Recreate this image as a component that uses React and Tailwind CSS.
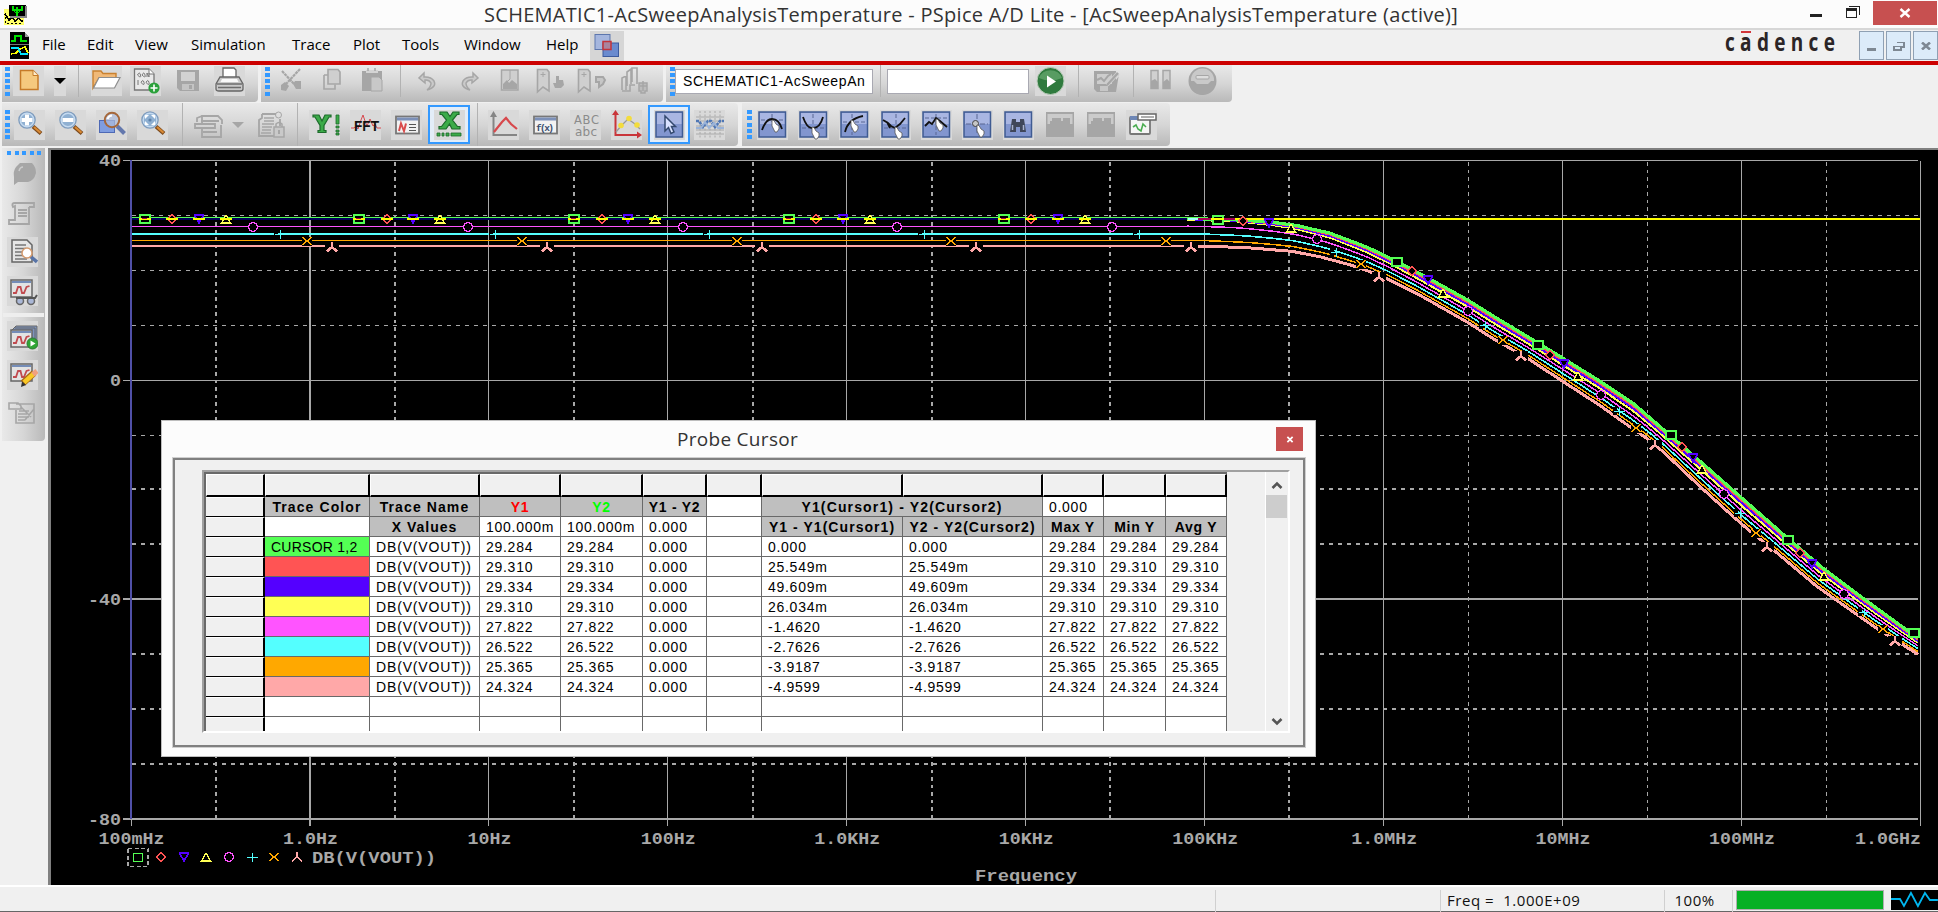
import React from 'react';

const UI = "font-['Open_Sans']";

/* ---------- chart data ---------- */
const DECADE = 178.95;
const X0 = 131;
const TOP = [[131, 218.5], [1187, 218.5], [1240, 220], [1275, 222.5], [1297, 225.5], [1330, 233], [1367, 247], [1390, 258], [1423, 275], [1468, 300], [1500, 320], [1535, 341], [1563, 358], [1600, 381], [1633, 403], [1663, 429], [1700, 461], [1741, 497], [1783, 534], [1823, 568], [1863, 598], [1900, 625], [1920, 639]];
const BOTTOM = [[131, 246], [1205, 246], [1250, 248], [1292, 251.5], [1320, 257], [1353, 266], [1370, 272], [1387, 279], [1417, 294], [1468, 323], [1493, 339], [1528, 359], [1563, 382], [1600, 406], [1628, 426], [1647, 439], [1663, 452], [1700, 487], [1733, 517], [1748, 530], [1773, 550], [1817, 587], [1847, 608], [1877, 629], [1893, 639], [1920, 656]];

function at(points, x) {
  for (let i = 1; i < points.length; i++) {
    if (x <= points[i][0]) {
      const [ax, ay] = points[i - 1];
      const [bx, by] = points[i];
      return ay + ((by - ay) * (x - ax)) / (bx - ax);
    }
  }
  return points[points.length - 1][1];
}

const TRACES = [
  { color: '#ffa8a8', low: 1, high: 0.98, w: 3 },
  { color: '#ffa800', low: 0.8, high: 0.82, w: 1.5 },
  { color: '#54ffff', low: 0.56, high: 0.65, w: 1.6 },
  { color: '#ff54ff', low: 0.28, high: 0.48, w: 1.5 },
  { color: '#ffff54', low: 0.05, high: 0.3, w: 2 },
  { color: '#5400ff', low: 0.03, high: 0.2, w: 2 },
  { color: '#ff5454', low: 0.02, high: 0.11, w: 1.8 },
  { color: '#54ff54', low: 0, high: 0.01, w: 3.2 },
];

function traceY(t, x) {
  const k = Math.min(1, Math.max(0, (x - 1230) / 200));
  const f = t.low + (t.high - t.low) * k;
  const a = at(TOP, x);
  return a + (at(BOTTOM, x) - a) * f;
}

function tracePoints(t, start) {
  const pts = [`${start},${traceY(t, start).toFixed(1)}`];
  for (let x = start + 3; x <= 1920; x += 4) pts.push(`${x},${traceY(t, x).toFixed(1)}`);
  return pts.join(' ');
}

const KINDS = ['square', 'diamond', 'down', 'up', 'circle', 'plus', 'cross', 'tee'];
const PITCH = 214.8;
const FLAT_X = [144.5, 172, 198.5, 225.5, 253, 279.7, 307, 332];
const FLAT_Y = [218.5, 219, 219, 219, 226.5, 234, 240.5, 247];
const FLAT_LINES = [[226, 1, '#ff54ff'], [233, 2, '#54ffff'], [240, 1, '#ffa800'], [245, 2, '#ffa8a8']];
const FALLING = [
  [[1217.5, 220], [1243, 221], [1268.5, 223], [1291, 228], [1316.5, 239], [1336, 251.5], [1361, 264], [1379, 277]],
  [[1397, 262], [1412, 271], [1428, 280], [1443, 293], [1468, 311], [1484.5, 325], [1503, 340], [1520.5, 356]],
  [[1537.5, 345], [1550, 355], [1563.5, 364], [1578, 376], [1601, 395], [1619, 411], [1635.5, 428], [1654.5, 445]],
  [[1671, 435], [1682, 446.5], [1692.5, 458], [1701.5, 469], [1724, 494], [1740, 512.5], [1755.5, 532.5], [1767, 547]],
  [[1787.5, 540], [1799.5, 553], [1812, 564], [1823.5, 576], [1843.5, 594], [1863.5, 612], [1883, 629], [1894.5, 641]],
  [[1914, 633]],
];

function Marker({ kind, x, y, bold }) {
  const s = bold ? 2 : 1;
  const p = { fill: 'none', strokeWidth: 1.3 };
  return (
    <g transform={`translate(${Math.round(x)} ${Math.round(y)})`}>
      {kind === 'square' && <rect x={-5} y={-4} width={bold ? 10 : 9} height={8} fill="#000" stroke="#54ff54" strokeWidth={s} />}
      {kind === 'diamond' && <path d="M0-4.5 4.5 0 0 4.5-4.5 0Z" {...p} fill="#000" stroke="#ff5454" />}
      {kind === 'down' && <path d="M-5-4H5M-4-3 0 4 4-3" {...p} fill="#000" stroke="#5400ff" strokeWidth={1.8} />}
      {kind === 'up' && <path d="M0-4 4.5 4H-4.5Z" {...p} fill="#000" stroke="#ffff54" />}
      {kind === 'circle' && <circle r={4.3} {...p} fill="#000" stroke="#ff54ff" />}
      {kind === 'plus' && <g>{bold && <rect x={-6} y={-4} width={4} height={8} fill="#000" />}<rect x={-5} y={0} width={11} height={1} fill="#54ffff" /><rect x={0} y={-4} width={1} height={9} fill="#54ffff" /></g>}
      {kind === 'cross' && <g><rect x={-5} y={-4.5} width={10} height={9} fill="#000" /><path d="M-5-4 5 4M-5 4 5-4" {...p} stroke="#ffa800" /></g>}
      {kind === 'tee' && <g>{bold && <rect x={-7} y={-5} width={14} height={9} fill="#000" />}<path d="M0-5V0L-5 4.5M0 0 5 4.5" {...p} strokeWidth={bold ? 2.6 : 1.3} stroke="#ffa8a8" /></g>}
    </g>
  );
}

const DECADES = ['100mHz', '1.0Hz', '10Hz', '100Hz', '1.0KHz', '10KHz', '100KHz', '1.0MHz', '10MHz', '100MHz', '1.0GHz'];
const H_LINES = [[160.5, 1, 0], [215.5, 1, 1], [270.5, 1, 1], [325.5, 1, 1], [380.5, 1, 0], [435.5, 1, 1], [489, 2, 1], [544, 2, 1], [599, 2, 0], [654, 2, 1], [709, 2, 1], [764, 2, 1], [819, 2, 0]];
const Y_LABELS = [['40', 166], ['0', 386], ['-40', 605], ['-80', 825]];

function Plot() {
  const mono = "font-['Liberation_Mono'] font-bold";
  return (
    <svg className="block h-full w-full" viewBox="51 150 1887 735" preserveAspectRatio="none" shapeRendering="crispEdges">
      <g stroke="#a8a8a8" fill="none">
        {H_LINES.map(([y, w, d]) => (
          <line key={y} x1={d ? 132 : 123} x2="1918" y1={y} y2={y} strokeWidth={w} strokeDasharray={d ? '4 5' : undefined} />
        ))}
        {DECADES.map((_, i) => {
          const x = Math.floor(X0 + i * DECADE);
          return <line key={i} x1={i === 1 ? x + 1 : x + 0.5} x2={i === 1 ? x + 1 : x + 0.5} y1={i === 0 ? 819 : 161} y2="826" strokeWidth={i === 1 ? 2 : 1} />;
        })}
        {DECADES.slice(0, 10).map((_, i) => {
          const x = Math.floor(X0 + i * DECADE + 85.2);
          return <line key={i} x1={i < 7 ? x : x + 0.5} x2={i < 7 ? x : x + 0.5} y1="162" y2="819" strokeWidth={i < 7 ? 2 : 1} strokeDasharray="3.5 4" />;
        })}
      </g>
      <line x1="131" x2="131" y1="160" y2="819" stroke="#5050a8" strokeWidth="2" />
      <rect x="132" y="217" width="1055" height="1" fill="#54ff54" />
      <rect x="132" y="218" width="1055" height="2" fill="#000058" />
      {FLAT_LINES.map(([y, h, c]) => <rect key={c} x="132" y={y} width="1055" height={h} fill={c} />)}
      {TRACES.map((t) => (
        <polyline key={t.color} points={tracePoints(t, 1187)} fill="none" stroke={t.color} strokeWidth={t.w} />
      ))}
      <rect x="1188" y="218" width="10" height="2" fill="#a8ffff" />
      <rect x="1198" y="218" width="37" height="2" fill="#a80054" />
      <rect x="1235" y="218" width="685" height="2" fill="#ffff00" />
      {[0, 1, 2, 3, 4].map((g) => KINDS.map((k, i) => (
        <Marker key={`${g}${k}`} kind={k} x={FLAT_X[i] + g * PITCH} y={FLAT_Y[i]} bold={g < 5} />
      )).filter((_, i) => g < 4 || i > 3 || FLAT_X[i] + g * PITCH < 1190))}
      {[0, 1, 2, 3, 4].map((g) => [0, 1, 2, 3].map((i) => (
        <g key={`${g}-${i}`}>
          <rect x={Math.round(FLAT_X[i] + g * PITCH) - 6} y="218" width="12" height="2" fill="#ffff00" />
          {i === 0 && <rect x={Math.round(FLAT_X[0] + g * PITCH) - 3} y="218" width="5" height="1" fill="#a80054" />}
        </g>
      )))}
      {FALLING.map((row, g) => row.map(([x, y], i) => <Marker key={`${g}${i}`} kind={KINDS[i]} x={x} y={y} bold />))}
      <rect x="1211" y="218" width="13" height="2" fill="#ffff00" />
      <rect x="128" y="848.5" width="20" height="18" fill="none" stroke="#a8a8a8" strokeWidth="1.4" strokeDasharray="4 2.5" />
      {[138, 161, 184, 206, 229, 252, 274, 297].map((x, i) => <Marker key={x} kind={KINDS[i]} x={x} y={857} />)}
      <g className={mono} fill="#a8a8a8" fontSize="16.5">
        {Y_LABELS.map(([t, y]) => <text key={t} x={121} y={y} textAnchor="end" textLength={t.length * 11} lengthAdjust="spacingAndGlyphs">{t}</text>)}
        {DECADES.map((t, i) => {
          const w = t.length * 11;
          const x = i === 10 ? 1921 - w : X0 + i * DECADE - w / 2 + 0.5;
          return <text key={t} x={x} y="843.5" textLength={w} lengthAdjust="spacingAndGlyphs">{t}</text>;
        })}
        <text x="312" y="862.5" textLength="124" lengthAdjust="spacingAndGlyphs">DB(V(VOUT))</text>
        <text x="975" y="881" textLength="102" lengthAdjust="spacingAndGlyphs">Frequency</text>
      </g>
    </svg>
  );
}

/* ---------- icons (31 x 30 boxes) ---------- */
function Svg({ children, lit }) {
  return (
    <svg viewBox="0 0 31 30" className={lit ? 'block h-[30px] w-[31px] bg-[#d9d9d9]' : 'block h-[30px] w-[31px]'}>
      {children}
    </svg>
  );
}
const G = '#a6a6a6';

function Lens({ children }) {
  return (
    <g>
      <path d="M19 16.5 27 23.5" stroke="#7d4a1c" strokeWidth="4" />
      <path d="M20 17 26.5 22.8" stroke="#d98a35" strokeWidth="2.2" />
      <circle cx="13" cy="10" r="8" fill="#8fb0d2" stroke="#7f9cbd" strokeWidth="1.6" />
      <circle cx="13" cy="10" r="6.8" fill="none" stroke="#c4daf0" strokeWidth="1.4" />
      {children}
    </g>
  );
}
const ZoomInIcon = () => <Svg lit><Lens><path d="M13 4.5V15.5M7.5 10H18.5" stroke="#fff" strokeWidth="4" /></Lens></Svg>;
const ZoomOutIcon = () => <Svg lit><Lens><path d="M7.5 10H18.5" stroke="#fff" strokeWidth="4" /></Lens></Svg>;
const ZoomAreaIcon = () => (
  <Svg lit>
    <rect x="3.5" y="10.5" width="15" height="12" fill="#7f9de0" stroke="#4e69b5" />
    <path d="M21 16 28.5 23.5" stroke="#6478ad" strokeWidth="4" />
    <circle cx="16" cy="10" r="7.2" fill="#aebcdc" fillOpacity=".7" stroke="#a5673a" strokeWidth="2" />
    <path d="M11.5 9a5 5 0 0 1 4.5-3.5" fill="none" stroke="#fff" strokeWidth="2" />
  </Svg>
);
const ZoomFitIcon = () => (
  <Svg lit><Lens><path d="M8 5h4L8 9zM18 5h-4l4 4zM8 15h4l-4-4zM18 15h-4l4-4z" fill="#fff" /><circle cx="13" cy="10" r="1.6" fill="#5d83ad" /></Lens></Svg>
);
const NewIcon = () => (
  <Svg lit>
    <path d="M7.5 4.5H20L25 9.5V23.5H7.5Z" fill="#f5c97e" stroke="#c67b29" strokeWidth="1.5" />
    <path d="M20 4.5V9.5H25" fill="#fff0d0" stroke="#c67b29" />
  </Svg>
);
const OpenIcon = () => (
  <Svg lit>
    <path d="M2 22V5h8l2 2.5h13V12H8z" fill="#f0b978" stroke="#c9812f" strokeWidth="1.4" />
    <path d="M8 11.5H29L23.5 22H2.5Z" fill="#fff" stroke="#8d8d8d" strokeWidth="1.2" />
  </Svg>
);
const SimDocIcon = () => (
  <Svg lit>
    <path d="M4.5 3H19L24 8V24H4.5Z" fill="#e9e9e9" stroke="#777" strokeWidth="1.3" />
    <path d="M19 3V8H24" fill="#fff" stroke="#777" />
    <path d="M7.5 9q2-4 3 0t-3 0M12 9q2-4 3 0t-3 0M17 11V7l2 4V7M8 19V14M11 16.5q2-4 3 0t-3 0M16 16.5q2-4 3 0t-3 0" fill="none" stroke="#777" />
    <circle cx="24" cy="22" r="5.6" fill="#2aa13a" /><path d="M24 18.500V25.500M20.500 22H27.500" stroke="#fff" strokeWidth="1.6" />
  </Svg>
);
const SaveIcon = () => (
  <Svg><path d="M5 4H27V25H8L5 22Z" fill={G} /><rect x="9" y="6" width="14" height="9" fill="#d2d2d2" /><rect x="10" y="18" width="12" height="6" fill="#c4c4c4" /><rect x="17" y="19" width="3" height="4" fill={G} /></Svg>
);
const PrintIcon = () => (
  <Svg lit>
    <path d="M9 12V2H20L22 4V12" fill="#fff" stroke="#666" strokeWidth="1.3" />
    <path d="M6 11H25L29 18V23Q29 25 26 25H5Q2 25 2 23V18Z" fill="#c9c9c9" stroke="#666" strokeWidth="1.3" />
    <path d="M3 18H28M4 21.5H27" stroke="#6d6d6d" strokeWidth="1.5" /><path d="M8 13H23L24.5 16H6.5Z" fill="#fafafa" />
  </Svg>
);
const CutIcon = () => (
  <Svg><path d="M6 5 18 18M24 3 9 19" stroke={G} strokeWidth="2.2" strokeDasharray="3 .6" fill="none" /><path d="M5 24v-5l4-3 4 4-3 5zM19 15h6v8h-5l-3-5z" fill={G} /></Svg>
);
const CopyIcon = () => (
  <Svg><path d="M12 3.5H22L24 6V18H12Z" fill="#cfcfcf" stroke={G} strokeWidth="1.6" /><path d="M8 9V23H19V18.500M8 9H12" fill="none" stroke={G} strokeWidth="1.6" /></Svg>
);
const PasteIcon = () => (
  <Svg><path d="M5 5H25V25H5Z" fill={G} /><path d="M9 4H21V7H9Z" fill="#d4d4d4" /><path d="M11 2V5M18 2V5" stroke={G} strokeWidth="1.5" /><path d="M14 11H22L25 14V25H14Z" fill="#c8c8c8" stroke={G} /></Svg>
);
const UndoIcon = () => <Svg><path d="M12 7 7 12 13 17V14Q17 13.500 19 17Q19 21 15 24Q25 21 22 15Q19 10.500 12 11Z" fill="#cacaca" stroke={G} strokeWidth="1.5" /></Svg>;
const RedoIcon = () => <Svg><path d="M19 7 24 12 18 17V14Q14 13.500 12 17Q12 21 16 24Q6 21 9 15Q12 10.500 19 11Z" fill="#cacaca" stroke={G} strokeWidth="1.5" /></Svg>;
const PageIcon = () => <Svg><path d="M7.5 4H24V24H7.500Z" fill="#cfcfcf" stroke={G} strokeWidth="1.5" /><path d="M16 4V13L12 17" stroke={G} fill="none" /><path d="M9 23V18l4-4 2 3 3-3 5 4v5z" fill={G} /></Svg>;
const TagHandIcon = ({ flip }) => (
  <Svg><path d="M2.5 3.5H12L14 6V25L8 21 2.5 26Z" fill="#cfcfcf" stroke={G} strokeWidth="1.6" /><path d="M8 6V11M5.5 8.500H10.500" stroke={G} />{flip ? <path d="M20 11h7l2 3-2 4-4 3v-5h-3z" fill="#c6c6c6" stroke={G} strokeWidth="2" /> : <path d="M21 17V10h3v4h4l1 5-3 3h-6l-2-5z" fill={G} />}</Svg>
);
const TagsIcon = () => <Svg><path d="M3 24V12l4-2V24M8 20V6l4-3V18M13 16V2h5V18M3 25h8v-6h5" fill="none" stroke={G} strokeWidth="1.6" /><path d="M20 17h8v8h-2v2h-4v-2h-2zM24 15v10M21 20h7" fill="#bcbcbc" stroke={G} strokeWidth="1.5" /></Svg>;
const RunIcon = () => (
  <Svg lit><circle cx="15.5" cy="15" r="13.5" fill="#2f7a3e" stroke="#b9ccb9" strokeWidth="1" /><path d="M4 12a12 11 0 0 1 23 0q-12 5-23 0" fill="#74b37b" opacity=".6" /><path d="M12 9.500 21 15.500 12 21.500Z" fill="#fff" /></Svg>
);
const SaveEditIcon = () => <Svg><path d="M4 5H26V14L29 10V8L26 26H7L4 23Z" fill={G} /><path d="M7 8H22V18H7Z" fill="#cdcdcd" /><path d="M7 14l4-2 3 3 4-5 3-2" stroke={G} strokeWidth="2" fill="none" /><path d="M17 19 28 7" stroke="#d0d0d0" strokeWidth="4" /><path d="M17 19 28 7" stroke={G} strokeWidth="2.2" /><rect x="10" y="20" width="8" height="5" fill="#c7c7c7" /></Svg>;
const PauseIcon = () => <Svg><path d="M6 4.500h7v18H6zM18 4.500h7v18h-7z" fill="#d0d0d0" stroke={G} strokeWidth="1.5" /><path d="M6 15l4-2 3 3v7H6zM18 16l4-3 3 3v7h-7z" fill={G} /></Svg>;
const StopIcon = () => <Svg><circle cx="15.5" cy="15" r="14" fill={G} /><circle cx="15.5" cy="14" r="11.5" fill="#c9c9c9" /><path d="M2 15h5l3 3h11l3-3h5q-1 11-13.500 14Q3 27 2 15" fill={G} /><rect x="9" y="9.500" width="13" height="3.500" rx="1" fill="#ddd" stroke={G} /></Svg>;
const PrinterGrayIcon = () => <Svg><path d="M9 13V6H25L29 10V14M9 6L4 8V12M2 14H22V18H2ZM8 11h18M9 18V27H28V15M10 22H24" fill="none" stroke={G} strokeWidth="1.8" /></Svg>;
const LockDocIcon = () => <Svg><path d="M6 4H20M24 9V16M6 4V8L3 10V26H18" fill="none" stroke={G} strokeWidth="1.8" /><path d="M8 8H18M8 11H18M6 14H18M6 17H16M6 20H15M5 23H15" stroke={G} strokeWidth="1.5" /><circle cx="22.500" cy="5" r="3" fill="none" stroke={G} /><path d="M20 17v-3q3-3 6 0v3" fill="none" stroke={G} strokeWidth="1.5" /><rect x="18" y="17" width="10" height="10" fill="#c9c9c9" stroke={G} strokeWidth="1.5" /><path d="M23 20v4" stroke={G} strokeWidth="2" /></Svg>;
const YIcon = () => (
  <Svg lit>
    <path d="M4 5H10L13 11 16 5H22V7H20L15 15.500V20.500H17V22.500H9V20.500H11V15.500L6 7H4Z" fill="#3cab49" stroke="#1d6b2b" strokeWidth="1.2" />
    <path d="M27 5h3v9h-3zM27 16h3v2h-3zM27 20h3v2h-3zM27 23h3v2h-3z" fill="#3cab49" stroke="#1d6b2b" strokeWidth=".8" />
  </Svg>
);
const FftIcon = () => (
  <Svg lit><path d="M1 18H4L6 16 8 19 11 10 13 5 15 11 17 16 20 9 23 16 25 14 27 18H31" fill="none" stroke="#d6494f" strokeWidth="1" /><text x="4" y="20.5" textLength="25" lengthAdjust="spacingAndGlyphs" fontSize="14" className="font-['Liberation_Sans'] font-bold" fill="#111">FFT</text></Svg>
);
const WindowFrame = ({ children }) => (
  <Svg lit><rect x="5" y="6.500" width="23" height="17" fill="#f2f2f2" stroke="#777" strokeWidth="1.8" /><rect x="6" y="7.500" width="21" height="3" fill="#7c90b8" />{children}</Svg>
);
const FormulaIcon = () => <WindowFrame><path d="M8 21 10 13.500 13 21 15 13.500" fill="none" stroke="#d94b4b" strokeWidth="2" /><path d="M18 14.500H25M18 17.500H25M18 20.500H25" stroke="#555" strokeWidth="1.2" /></WindowFrame>;
const FxIcon = () => <WindowFrame><text x="7" y="20.5" fontSize="9.5" textLength="18" className="font-['Liberation_Mono'] font-bold" fill="#394d6e">f(x)</text></WindowFrame>;
const XIcon = () => (
  <Svg lit>
    <path d="M6 2H13L16 6.500 19 2H25V4.500H23L18.500 10 23.500 16.500H26V19H18L15.500 14 12 19H5V16.500H7.500L12.500 10 8 4.500H6Z" fill="#3cab49" stroke="#1d6b2b" strokeWidth="1.2" />
    <path d="M3 23h3v3H3zM8 23h2v3H8zM12 23h3v3h-3zM17 23h10v3H17z" fill="#3cab49" stroke="#1d6b2b" strokeWidth=".8" />
  </Svg>
);
const AxisIcon = () => (
  <Svg lit><path d="M5.5 4V25H29" fill="none" stroke="#858585" strokeWidth="2" /><path d="M5.500 1 9 7H2Z" fill="#858585" /><path d="M6 22 14 12 18 8 23 14 29 19" fill="none" stroke="#d7484c" strokeWidth="2.2" /></Svg>
);
const AbcIcon = () => (
  <Svg lit><g className="font-['DejaVu_Sans']" fill="#8b8b8b"><text x="4" y="13.5" fontSize="11.5" textLength="25">ABC</text><text x="5" y="25.5" fontSize="12" textLength="22">abc</text></g></Svg>
);
const PointsIcon = () => (
  <Svg lit><path d="M4.5 4V25H29" fill="none" stroke="#c9353a" strokeWidth="2" /><path d="M4.500 0 8 5H1ZM31 25 26 21.500V28.500Z" fill="#c9353a" /><path d="M5 22 10 16 17 9 24 14 29 19" fill="none" stroke="#999" strokeWidth="1.3" /><circle cx="10" cy="15.500" r="2.800" fill="#f3dc3d" /><circle cx="18" cy="8.500" r="2.800" fill="#f3dc3d" /><circle cx="26" cy="15" r="2.800" fill="#f3dc3d" /></Svg>
);
function Tile({ children }) {
  return (
    <Svg lit>
      <rect x="2" y="2" width="26.500" height="25" fill="#8296cf" stroke="#3f5b92" strokeWidth="1.5" />
      <rect x="3" y="3" width="24.500" height="11" fill="#a9b6e2" />
      {children}
    </Svg>
  );
}
const Hand = ({ x, y }) => <path transform={`translate(${x} ${y})`} d="M0 0 2 .5 4 4 7 6V9L5 12H3L1 8 0 6Z" fill="#fff" stroke="#555" strokeWidth=".8" />;
const Arrow = () => <path d="M11 6V21L14.5 17.5 17 23.5 20 22 17.500 16.500H21.500Z" fill="#d9e2ff" stroke="#34496f" strokeWidth="1.5" />;
const PeakIcon = () => <Tile><path d="M4 10H26M15 4V12" stroke="#596793" strokeDasharray="4 2" /><path d="M5 20Q9 9 15 9Q22 9 25 19" fill="none" stroke="#111" strokeWidth="1.8" /><Hand x={15} y={10} /></Tile>;
const TroughIcon = () => <Tile><path d="M4 18H26M15 4V14" stroke="#596793" strokeDasharray="4 2" /><path d="M5 7Q9 19 15 18Q22 18 25 7" fill="none" stroke="#111" strokeWidth="1.8" /><Hand x={14} y={17} /></Tile>;
const SlopeIcon = () => <Tile><path d="M4 12H26M13 4V25" stroke="#596793" strokeDasharray="4 2" /><path d="M6 22Q9 9 24 6" fill="none" stroke="#111" strokeWidth="1.8" /><Hand x={12} y={10} /></Tile>;
const MinIcon = () => <Tile><path d="M4 18H26M16 4V25" stroke="#596793" strokeDasharray="4 2" /><path d="M3 10 8 13 11 16 15 18 20 14 25 8M7 12l3 6" fill="none" stroke="#111" strokeWidth="1.800" /><Hand x={15} y={17} /></Tile>;
const MaxIcon = () => <Tile><path d="M4 8H26M15 4V25" stroke="#596793" strokeDasharray="4 2" /><path d="M4 16 8 12 11 14 15 8 19 11 26 17" fill="none" stroke="#111" strokeWidth="1.800" /><Hand x={15} y={9} /></Tile>;
const PointIcon = () => <Tile><path d="M4 14H26M15 4V25" stroke="#596793" strokeDasharray="5 2" /><circle cx="13.500" cy="13.500" r="3" fill="#c6c6c6" stroke="#444" /><Hand x={15} y={15} /></Tile>;
const FindIcon = () => <Tile><path d="M7 22 9 9H13V22ZM17 22V9H21L23 22ZM13 12H17V17H13Z" fill="#3f475a" /><path d="M9.500 15V20M20.500 15V20" stroke="#a9b3cf" strokeWidth="1.500" /></Tile>;
const WaveGridIcon = () => (
  <Svg lit><path d="M6 1V28M11 1V28M16 1V28M21 1V28M26 1V28" stroke="#aaa" strokeDasharray="2 1.500" strokeWidth="1" /><path d="M2 7H30M2 11H30M2 16H30M2 20H30M2 24H30" stroke="#aaa" /><path d="M2 11H5L9 17 14 11H17L21 17 26 11H30" fill="none" stroke="#4f77b5" strokeWidth="2.6" strokeDasharray="3 .8" /><path d="M2 18 7 18 11 12 15 18 20 13 24 18H30" fill="none" stroke="#9ab3d8" strokeWidth="2" /></Svg>
);
const BoxGrayIcon = () => <Svg><rect x="2" y="2" width="28" height="25" fill={G} /><path d="M3.500 4H28.500V14H26V8H19V11H17V8H8V11H6V14H3.500Z" fill="#cbcbcb" /></Svg>;
const ChartWindowIcon = () => (
  <Svg lit><rect x="4" y="7" width="20" height="17" rx="1" fill="#f5f5f5" stroke="#777" strokeWidth="1.8" /><rect x="4" y="6" width="11" height="4" fill="#6e87b6" /><rect x="12" y="4" width="18" height="6" fill="#fff" stroke="#666" strokeWidth="1.5" /><path d="M15 7H28" stroke="#777" strokeWidth="1.2" /><path d="M7 17 10 15 12 19 15 21 17 14 20 17" fill="none" stroke="#4aac50" strokeWidth="1.6" /></Svg>
);

/* left column icons */
const BlobIcon = () => <Svg><path d="M9 8 13 4H25Q29 8 29 14 27 22 21 23H11L7 26V18Q6 12 9 8Z" fill={G} /><path d="M12 12q1-4 4-4" fill="none" stroke="#ccc" strokeWidth="1.5" /></Svg>;
const ScrollIcon = () => <Svg><path d="M8 5H27V9H22M8 5Q4 5 6 9L8 8V22H2V26H22V9M11 12H20M11 15H20M11 18H20" fill="none" stroke={G} strokeWidth="1.8" /></Svg>;
const DocFindIcon = () => (
  <Svg lit><path d="M5 3H20L25 8V25H5Z" fill="#e6e6e6" stroke="#666" strokeWidth="1.5" /><path d="M8 8H19M8 11.500H19M8 15H16M8 18.500H16M8 22H20" stroke="#777" strokeWidth="1.300" /><path d="M23 19 30 25" stroke="#5874a7" strokeWidth="3.500" /><circle cx="20" cy="16" r="5" fill="#fff" stroke="#d39a6e" strokeWidth="1.500" /></Svg>
);
const MiniChart = ({ y = 4 }) => (
  <g transform={`translate(0 ${y})`}><rect x="4" y="0" width="21" height="17" fill="#e3e3e3" stroke="#666" strokeWidth="1.5" /><rect x="5" y="1" width="19" height="2" fill="#758db8" /><path d="M6 13H9L11 7H13.500L15 13H17L19.500 7 22.500 6" fill="none" stroke="#c14a4f" strokeWidth="1.8" /></g>
);
const ChartGlassesIcon = () => <Svg lit><MiniChart /><circle cx="13" cy="25" r="3.500" fill="#aab7d6" stroke="#666" strokeWidth="1.500" /><circle cx="24" cy="25" r="3.500" fill="#aab7d6" stroke="#666" strokeWidth="1.500" /><path d="M9 22H28L30 19" fill="none" stroke="#555" strokeWidth="2" /></Svg>;
const ChartRunIcon = () => <Svg lit><path d="M5 9 9 5H30V20M8 7H28V22" fill="#7d93bd" stroke="#666" strokeWidth="1" /><MiniChart y={9} /><circle cx="25.500" cy="22.500" r="5.500" fill="#2fa535" stroke="#2f7a33" /><path d="M23.500 19.500 28.500 22.500 23.500 25.500Z" fill="#fff" /></Svg>;
const ChartEditIcon = () => <Svg lit><MiniChart /><path d="M16 23 27 13" stroke="#a96813" strokeWidth="6.500" /><path d="M17 22.500 27 13.500" stroke="#f9c928" strokeWidth="4.500" /><path d="M26 14.500 30 11" stroke="#f0a080" strokeWidth="5" /><path d="M14 27 15 21.500 19 25Z" fill="#333" /></Svg>;
const ListGrayIcon = () => <Svg><path d="M2 4H11L14 7V10H2ZM9 5H27V24H9V11M12 12H22M11 15H20M11 18H22M11 21H18M14 8 24 18M27 10 18 21" fill="none" stroke={G} strokeWidth="1.6" /></Svg>;

/* ---------- toolbar pieces ---------- */
function Grip() {
  return (
    <div className="flex h-[29px] w-[5px] flex-col justify-between">
      {[0, 1, 2, 3, 4].map((i) => <span key={i} className="block h-1 w-[5px] bg-[#3399ff]" />)}
    </div>
  );
}
const Sep = ({ className }) => <div className={`h-full w-px bg-[#b2b2b2] ${className}`} />;
const Caret = ({ color }) => (
  <svg viewBox="0 0 12 6" className="block h-[6px] w-3"><path d="M0 0H12L6 6Z" fill={color} /></svg>
);
const barBg = 'bg-linear-to-b from-[#e9e9e9] via-[#d6d6d6] to-[#b9b9b9]';

function ToolRowOne() {
  const panel = `flex h-[37px] items-center rounded-br pb-[5px] ${barBg}`;
  return (
    <div className="flex h-[38px] items-start gap-[3px] pl-[2px]">
      <div className={`${panel} w-[256px] pl-[3px]`}>
        <Grip />
        <div className="ml-[3px]"><NewIcon /></div>
        <div className="ml-[10px] flex h-[30px] w-3 items-center bg-[#d9d9d9]"><Caret color="#000" /></div>
        <Sep className="ml-[12px]" />
        <div className="ml-[12px]"><OpenIcon /></div>
        <div className="ml-[8px]"><SimDocIcon /></div>
        <div className="ml-[11px]"><SaveIcon /></div>
        <div className="ml-[11px]"><PrintIcon /></div>
      </div>
      <div className={`${panel} w-[402px] pl-[4px]`}>
        <Grip />
        <div className="ml-[6px]"><CutIcon /></div>
        <div className="ml-[9px]"><CopyIcon /></div>
        <div className="ml-[10px]"><PasteIcon /></div>
        <Sep className="ml-[12px]" />
        <div className="ml-[11px]"><UndoIcon /></div>
        <div className="ml-[11px]"><RedoIcon /></div>
        <div className="ml-[9px]"><PageIcon /></div>
        <div className="ml-[10px]"><TagHandIcon /></div>
        <div className="ml-[10px]"><TagHandIcon flip /></div>
        <div className="ml-[12px]"><TagsIcon /></div>
      </div>
      <div className={`${panel} w-[566px] pl-[4px]`}>
        <Grip />
        <div className="flex h-[25px] w-[198px] items-center overflow-hidden border border-[#a9a9b2] bg-white pl-[7px] font-['Liberation_Sans'] text-[14px] tracking-[0.62px] whitespace-nowrap text-black">SCHEMATIC1-AcSweepAn</div>
        <Sep className="ml-[7px]" />
        <div className="ml-[6px] h-[25px] w-[142px] border border-[#a9a9b2] bg-white" />
        <div className="ml-[6px]"><RunIcon /></div>
        <Sep className="ml-[12px]" />
        <div className="ml-[11px]"><SaveEditIcon /></div>
        <Sep className="ml-[12px]" />
        <div className="ml-[11px]"><PauseIcon /></div>
        <div className="ml-[11px]"><StopIcon /></div>
      </div>
    </div>
  );
}

function ToolRowTwo() {
  const selected = 'flex h-[39px] w-[42px] items-center justify-center border-2 border-[#3399ff] bg-[#e3edf8]';
  const panel = `flex h-[43px] items-center rounded-r ${barBg}`;
  return (
    <div className="flex h-[43px] gap-[4px] pl-[2px]">
      <div className={`${panel} w-[736px] pl-[3px]`}>
        <Grip />
        <div className="ml-[4px] flex gap-[10px]"><ZoomInIcon /><ZoomOutIcon /><ZoomAreaIcon /><ZoomFitIcon /></div>
        <Sep className="ml-[14px]" />
        <div className="ml-[10px]"><PrinterGrayIcon /></div>
        <div className="ml-[8px]"><Caret color="#a6a6a6" /></div>
        <div className="ml-[12px]"><LockDocIcon /></div>
        <Sep className="ml-[10px]" />
        <div className="ml-[11px] flex gap-[10px]"><YIcon /><FftIcon /><FormulaIcon /></div>
        <div className={`${selected} ml-[6px]`}><XIcon /></div>
        <Sep className="ml-[7px]" />
        <div className="ml-[10px] flex gap-[10px]"><AxisIcon /><FxIcon /><AbcIcon /><PointsIcon /></div>
        <div className={`${selected} ml-[6px]`}><Tile><Arrow /></Tile></div>
        <div className="ml-[4px]"><WaveGridIcon /></div>
      </div>
      <div className={`${panel} w-[428px] gap-[10px] pl-[5px]`}>
        <Grip />
        <div className="ml-[-5px] flex gap-[10px]">
          <PeakIcon /><TroughIcon /><SlopeIcon /><MinIcon /><MaxIcon /><PointIcon /><FindIcon /><BoxGrayIcon /><BoxGrayIcon /><ChartWindowIcon />
        </div>
      </div>
    </div>
  );
}

function SideBar() {
  return (
    <div className="flex h-[293px] w-[43px] flex-col rounded-br bg-linear-to-r from-[#e9e9e9] via-[#d6d6d6] to-[#b9b9b9] pt-[3px] pl-[5px]">
      <div className="flex w-[34px] justify-between">
        {[0, 1, 2, 3, 4].map((i) => <span key={i} className="block h-1 w-1 bg-[#3399ff]" />)}
      </div>
      <div className="mt-[4px] flex flex-col gap-[9px]"><BlobIcon /><ScrollIcon /><DocFindIcon /><ChartGlassesIcon /></div>
      <div className="mt-[7px] ml-[-4px] h-[4px] w-[41px] bg-[#eeeeee]" />
      <div className="mt-[4px] flex flex-col gap-[9px]"><ChartRunIcon /><ChartEditIcon /><ListGrayIcon /></div>
    </div>
  );
}

/* ---------- probe cursor table ---------- */
const COLS = 'grid grid-cols-[59px_105px_110px_81px_82px_64px_55px_141px_140px_61px_62px_61px]';
const ROWS = [
  ['bg-[#54ff54]', '29.284', '0.000'],
  ['bg-[#ff5454]', '29.310', '25.549m'],
  ['bg-[#5400ff]', '29.334', '49.609m'],
  ['bg-[#ffff54]', '29.310', '26.034m'],
  ['bg-[#ff54ff]', '27.822', '-1.4620'],
  ['bg-[#54ffff]', '26.522', '-2.7626'],
  ['bg-[#ffa800]', '25.365', '-3.9187'],
  ['bg-[#ffa8a8]', '24.324', '-4.9599'],
];

function Cell({ children, className = '' }) {
  return <div className={`flex items-center overflow-hidden border-r border-b border-[#696969] whitespace-nowrap ${className || 'bg-white pl-[6px]'}`}>{children}</div>;
}
const Head = ({ children, className = '' }) => <Cell className={`justify-center bg-[#bfbfbf] font-bold ${className}`}>{children}</Cell>;
const RowHead = () => <div className="border-t border-r-2 border-b border-t-white border-r-black border-b-black bg-[#f0f0f0]" />;

function CursorTable() {
  return (
    <div className="flex h-[263px] w-[1088px] border-2 border-t-[#a0a0a0] border-r-white border-b-white border-l-[#a0a0a0] bg-[#f0f0f0]">
      <div className="h-[259px] w-[1023px] overflow-hidden border-t-2 border-l-2 border-[#696969] font-['Liberation_Sans'] text-[14px] leading-none tracking-[0.72px] text-black">
        <div className={`${COLS} h-[23px]`}>
          {Array.from({ length: 12 }, (_, i) => (
            <div key={i} className="border-t border-r-2 border-b-2 border-l border-t-white border-r-black border-b-black border-l-white bg-[#f0f0f0]" />
          ))}
        </div>
        <div className={`${COLS} h-[20px]`}>
          <RowHead /><Head><span className="tracking-[1.1px]">Trace Color</span></Head><Head><span className="tracking-[1.1px]">Trace Name</span></Head><Head className="text-[#ff0000]">Y1</Head><Head className="text-[#00ff00]">Y2</Head><Head>Y1 - Y2</Head><Cell />
          <Head className="col-span-2"><span className="tracking-[1.15px]">Y1(Cursor1) - Y2(Cursor2)</span></Head><Cell>0.000</Cell><Cell /><Cell />
        </div>
        <div className={`${COLS} h-[20px]`}>
          <RowHead /><Cell /><Head><span className="tracking-[1px]">X Values</span></Head><Cell>100.000m</Cell><Cell>100.000m</Cell><Cell>0.000</Cell><Cell />
          <Head><span className="tracking-[1.05px]">Y1 - Y1(Cursor1)</span></Head><Head><span className="tracking-[1.05px]">Y2 - Y2(Cursor2)</span></Head><Head>Max Y</Head><Head>Min Y</Head><Head>Avg Y</Head>
        </div>
        {ROWS.map(([bg, y, diff], i) => (
          <div key={i} className={`${COLS} h-[20px]`}>
            <RowHead /><Cell className={`pl-[6px] ${bg}`}>{i === 0 ? <span className="tracking-[0.25px]">CURSOR 1,2</span> : null}</Cell>
            <Cell><span className="tracking-[0.85px]">DB(V(VOUT))</span></Cell><Cell>{y}</Cell><Cell>{y}</Cell><Cell>0.000</Cell><Cell />
            <Cell>{diff}</Cell><Cell>{diff}</Cell><Cell>{y}</Cell><Cell>{y}</Cell><Cell>{y}</Cell>
          </div>
        ))}
        {[0, 1].map((r) => (
          <div key={r} className={`${COLS} h-[20px]`}>
            <RowHead />{Array.from({ length: 11 }, (_, i) => <Cell key={i} />)}
          </div>
        ))}
      </div>
      <div className="ml-[38px] flex w-[22px] flex-col items-center border-l border-white bg-[#f0f0f0]">
        <svg viewBox="0 0 12 8" className="mt-[9px] block h-2 w-3"><path d="M1.5 7 6 2.500 10.500 7" fill="none" stroke="#555" strokeWidth="2.6" /></svg>
        <div className="mt-[6px] h-[23px] w-[21px] bg-[#cdcdcd]" />
        <svg viewBox="0 0 12 8" className="mt-auto mb-[5px] block h-2 w-3"><path d="M1.5 1 6 5.500 10.500 1" fill="none" stroke="#555" strokeWidth="2.6" /></svg>
      </div>
    </div>
  );
}

function ProbeCursor() {
  return (
    <div className="absolute top-[270px] left-[110px] flex h-[337px] w-[1155px] flex-col border border-[#bdbdbd] bg-[#fcfcfc] pr-[9px] pl-[10px]">
      <div className="flex h-[36px] items-center">
        <div className={`flex-1 pl-[27px] text-center ${UI} text-[19px] leading-none tracking-[0.3px] text-[#333]`}>Probe Cursor</div>
        <div className="mr-[3px] flex h-6 w-[27px] items-center justify-center bg-[#c75050]">
          <svg viewBox="0 0 8 8" className="block h-[7px] w-[8px]"><path d="M1 1 7 7M7 1 1 7" stroke="#fff" strokeWidth="2" /></svg>
        </div>
      </div>
      <div className="flex h-[291px] border border-[#cfcfcf]">
        <div className="flex flex-1 border-2 border-[#808080] bg-[#f0f0f0] pt-[10px] pl-[27px]">
          <CursorTable />
        </div>
      </div>
    </div>
  );
}

/* ---------- frame ---------- */
const MENUS = [
  ['File', 'w-[45px]'], ['Edit', 'w-[48px]'], ['View', 'w-[56px]'], ['Simulation', 'w-[101px]'], ['Trace', 'w-[61px]'],
  ['Plot', 'w-[49px]'], ['Tools', 'w-[62px]'], ['Window', 'w-[82px]'], ['Help', 'w-[44px]'],
];

function TitleBar() {
  return (
    <div className="flex h-[30px] border-b-2 border-[#d7d7d7] bg-[#fcfcfc]">
      <svg viewBox="0 0 23 20" shapeRendering="crispEdges" className="mt-[5px] ml-[4px] block h-5 w-[23px]">
        <path d="M0 4H6V13H20V20H0Z" fill="#ffff66" /><path d="M1 8V18H18V14" fill="none" stroke="#000" strokeDasharray="2 2" />
        <path d="M1 9 5 15 8 12 11 16 15 13 18 17" stroke="#000" strokeWidth="1.500" fill="none" /><rect x="5" y="0" width="17" height="11" fill="#000" /><path d="M22 1V12H6" fill="none" stroke="#888" strokeWidth="2" />
        <path d="M9 1V5L13 9 18 4V1M13 2V11M8 5h11" fill="none" stroke="#00e000" strokeWidth="1.3" />
      </svg>
      <div className={`ml-[457px] w-[1326px] pt-[4px] ${UI} text-[20px] leading-[22px] tracking-[0.29px] whitespace-nowrap text-[#333]`}>SCHEMATIC1-AcSweepAnalysisTemperature - PSpice A/D Lite - [AcSweepAnalysisTemperature (active)]</div>
      <div className="mt-[14px] h-[3px] w-[12px] bg-[#222]" />
      <svg viewBox="0 0 14 12" shapeRendering="crispEdges" className="mt-[6px] ml-[24px] block h-3 w-[14px]"><path d="M3 .5H13.500V9" fill="none" stroke="#222" /><rect x=".5" y="3" width="10" height="8.500" fill="none" stroke="#222" /><rect x="0" y="2" width="11" height="3" fill="#222" /></svg>
      <div className="mt-px ml-[13px] flex h-6 w-[64px] items-center justify-center bg-[#c75050]">
        <svg viewBox="0 0 12 10" className="block h-[10px] w-3"><path d="M1.5 1 10.500 9M10.500 1 1.500 9" stroke="#fff" strokeWidth="2.4" /></svg>
      </div>
    </div>
  );
}

function MdiButton({ children }) {
  return <div className="flex h-[29px] w-[25px] items-center justify-center border border-[#8fa0b3] bg-[#dcebf9]">{children}</div>;
}

function MenuBar() {
  return (
    <div className="flex h-[31px] items-center bg-[#f0f0f0]">
      <svg viewBox="0 0 19 27" shapeRendering="crispEdges" className="ml-[10px] block h-[27px] w-[19px]">
        <path d="M0 0H15L19 5V27H0Z" fill="#000" /><path d="M15 0V5H19" fill="#999" /><path d="M1 9H5V4H11V9H17" fill="none" stroke="#00e000" strokeWidth="2" /><path d="M0 12.500H19" stroke="#777" />
        <path d="M1 22 6 21 10 17 15 15 18 21" fill="none" stroke="#ffff00" strokeWidth="1.5" /><path d="M1 16H8L11 22H18" fill="none" stroke="#00e5ff" strokeWidth="1.5" />
      </svg>
      <div className={`ml-[13px] flex pb-[2px] ${UI} text-[15px] leading-none font-medium text-black`}>
        {MENUS.map(([t, w]) => <span key={t} className={w}>{t}</span>)}
      </div>
      <div className="flex h-[30px] w-[34px] items-center justify-center bg-[#d6d6d6]">
        <svg viewBox="0 0 28 26" className="block h-[26px] w-7"><rect x="2" y="1.500" width="15" height="15" fill="#a5b6de" stroke="#5d76ad" /><rect x="10" y="10" width="15.500" height="13.500" fill="#6a8bcf" stroke="#3d5b9e" /><rect x="10" y="8.500" width="8" height="8" fill="#a9849e" stroke="#c3333a" strokeWidth="1.5" /></svg>
      </div>
      <div className="ml-[1101px] flex h-[31px] w-[126px] flex-col">
        <div className="mt-[1px] ml-[16px] h-[2px] w-[10px] bg-[#d2363b]" />
        <div className={`mt-[-8px] h-[32px] w-[160px] origin-left scale-x-[0.76] ${UI} text-[25px] leading-[32px] font-bold tracking-[7px] text-[#2b2527]`}>cadence</div>
      </div>
      <div className="ml-auto flex gap-[2px]">
        <MdiButton><div className="mt-[7px] h-[3px] w-[9px] bg-[#7e8893]" /></MdiButton>
        <MdiButton><svg viewBox="0 0 12 10" shapeRendering="crispEdges" className="block h-[10px] w-3"><path d="M4 1.500H11V6H8M1 5.500H8V9H1Z" fill="none" stroke="#7e8893" strokeWidth="1.5" /></svg></MdiButton>
        <MdiButton><svg viewBox="0 0 10 8" className="block h-2 w-[10px]"><path d="M1 .500 9 7.500M9 .500 1 7.500" stroke="#7e8893" strokeWidth="2.6" /></svg></MdiButton>
      </div>
    </div>
  );
}

function StatusBar() {
  const sep = 'h-[22px] w-px bg-[#d0d0d0]';
  return (
    <div className={`flex h-[27px] items-start border-t-2 border-b border-t-white border-b-[#666] bg-[#f0f0f0] pt-[3px] ${UI} text-[15px] leading-[20px] whitespace-pre text-[#111]`}>
      <div className={`${sep} ml-[1215px]`} />
      <div className={`${sep} ml-[224px]`} />
      <div className="ml-[6px] w-[217px] tracking-[0.55px]">Freq =  1.000E+09</div>
      <div className={sep} />
      <div className="ml-[10px] w-[58px] tracking-[0.5px]">100%</div>
      <div className={sep} />
      <div className="ml-[3px] h-[20px] w-[148px] border border-[#b0b0b0] bg-[#06b025]" />
      <svg viewBox="0 0 47 20" className="ml-[7px] block h-5 w-[47px] bg-black"><path d="M0 9H9L13 16 20 3 27 16 34 3 39 10H47" fill="none" stroke="#00b7f0" strokeWidth="1.8" /></svg>
    </div>
  );
}

export default function App() {
  return (
    <div className="flex h-[912px] w-[1938px] flex-col overflow-hidden bg-[#f0f0f0]">
      <TitleBar />
      <MenuBar />
      <div className="h-[4px] bg-[#cc0000]" />
      <ToolRowOne />
      <ToolRowTwo />
      <div className="mt-[2px] flex h-[737px]">
        <div className="w-[48px] pl-[2px]"><SideBar /></div>
        <div className="relative h-[737px] w-[1890px] border-t-2 border-l-3 border-[#808080] bg-black">
          <Plot />
          <ProbeCursor />
        </div>
      </div>
      <StatusBar />
    </div>
  );
}
